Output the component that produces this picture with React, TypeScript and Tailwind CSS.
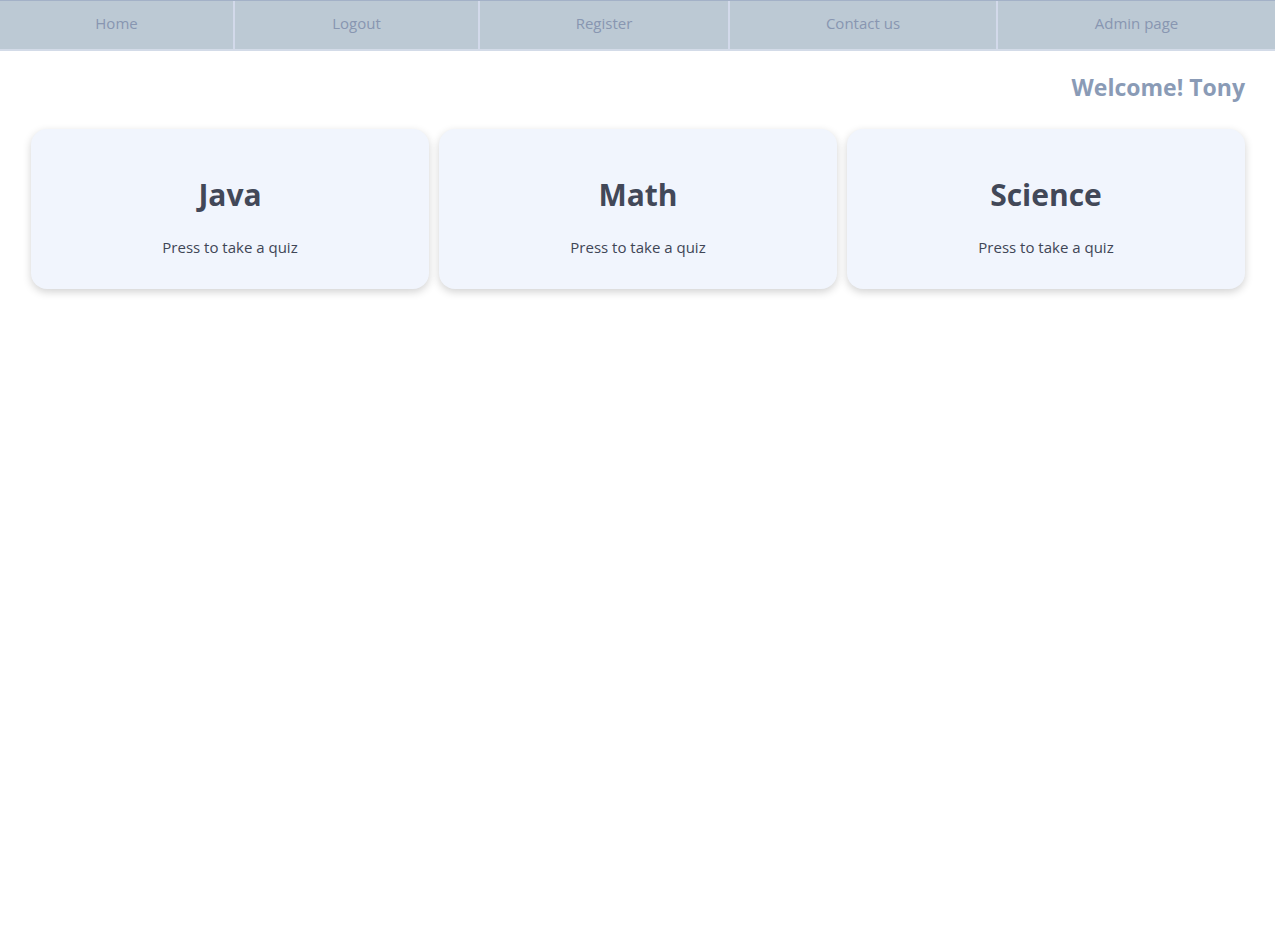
import React from "react";

const navItems = [
  { label: "Home", w: "w-[235px]" },
  { label: "Logout", w: "w-[245px]" },
  { label: "Register", w: "w-[250px]" },
  { label: "Contact us", w: "w-[268px]" },
  { label: "Admin page", w: "flex-1" },
];

const cards = ["Java", "Math", "Science"];

export default function App() {
  return (
    <div
      className="min-h-[926px] bg-white"
      style={{ fontFamily: '"Open Sans", "Noto Sans", sans-serif' }}
    >
      <nav className="flex h-[51px] bg-[#bcc9d4] border-t border-[#a3b1c7] border-b-2 border-b-[#d3dbe8]">
        {navItems.map((n, i) => (
          <div
            key={n.label}
            className={`${n.w} flex items-center justify-center pb-[4px] text-[15px] text-[#8896b1] ${
              i < navItems.length - 1 ? "border-r-2 border-[#d2d9ea]" : ""
            }`}
          >
            {n.label}
          </div>
        ))}
      </nav>
      <div className="flex justify-end pr-[30px] pt-[20px]">
        <h2 className="text-[23px] font-bold text-[#8a9bb6] leading-[32px]">Welcome! Tony</h2>
      </div>
      <div className="grid grid-cols-3 gap-[10px] pl-[31px] pr-[30px] mt-[26px]">
        {cards.map((c) => (
          <div
            key={c}
            className="h-[160px] rounded-[16px] bg-[#f1f5fd] shadow-[0_3px_8px_rgba(0,0,0,0.18)] flex flex-col items-center pt-[46px]"
          >
            <h3 className="text-[30px] font-bold text-[#424858] leading-[40px]">{c}</h3>
            <p className="mt-[21px] text-[15px] text-[#3f4656] leading-[22px]">Press to take a quiz</p>
          </div>
        ))}
      </div>
    </div>
  );
}
